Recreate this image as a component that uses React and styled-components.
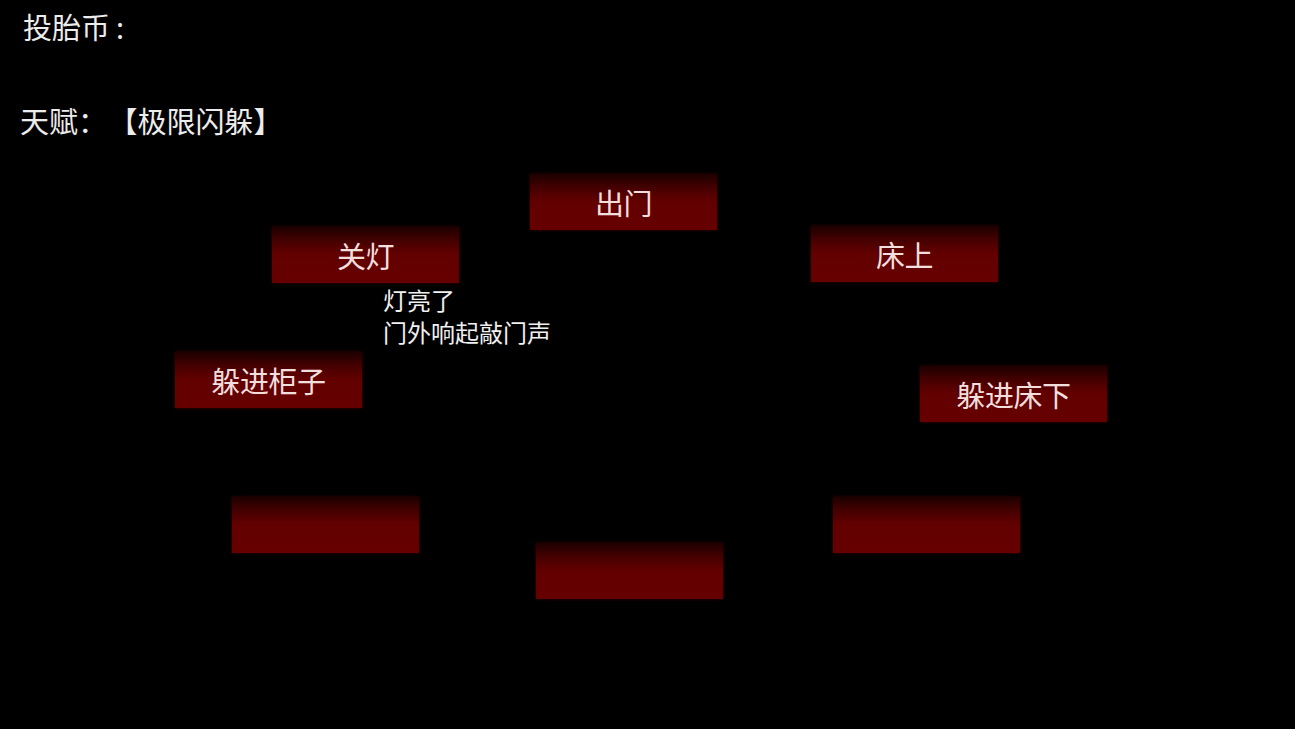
import React from "react"
import styled, { createGlobalStyle } from "styled-components"

const GlobalStyle = createGlobalStyle`
  html, body {
    margin: 0;
    padding: 0;
    background: #000;
  }
  body {
    font-family: "Noto Sans CJK SC", "Noto Sans", sans-serif;
  }
`

// choice buttons sit on a ring around the room, so each has its own spot
const choices = [
  { label: "出门", x: 530, y: 14 },
  { label: "关灯", x: 272, y: 67 },
  { label: "床上", x: 811, y: 66 },
  { label: "躲进柜子", x: 175, y: 192 },
  { label: "躲进床下", x: 920, y: 206 },
  { label: "", x: 232, y: 337 },
  { label: "", x: 833, y: 337 },
  { label: "", x: 536, y: 383 },
]

const App = () => {
  return (
    <Screen>
      <GlobalStyle />
      <Header>
        <StatLine>
          投胎币<Colon>:</Colon>
        </StatLine>
        <StatLine $indent={20}>
          天赋：<Talent>【极限闪躲】</Talent>
        </StatLine>
      </Header>
      <Board>
        {choices.map((c, i) => (
          <Choice key={i} style={{ left: c.x, top: c.y }}>
            {c.label}
          </Choice>
        ))}
        <Message>
          灯亮了
          <br />
          门外响起敲门声
        </Message>
      </Board>
    </Screen>
  )
}

export default App

const Screen = styled.div`
  width: 1295px;
  height: 729px;
  background: #000;
  overflow: hidden;
  display: flex;
  flex-direction: column;
`
const Header = styled.div`
  height: 160px;
  padding-top: 6px;
  box-sizing: border-box;
  display: flex;
  flex-direction: column;
  gap: 54px;
`
const StatLine = styled.div`
  padding-left: ${(p) => p.$indent ?? 23}px;
  font-size: 29px;
  line-height: 40px;
  color: #ececec;
  white-space: nowrap;
`
const Colon = styled.span`
  margin-left: 6px;
`
const Talent = styled.span`
  margin-left: 16px;
`
const Board = styled.div`
  position: relative;
  flex: 1;
`
const Choice = styled.div`
  position: absolute;
  width: 187px;
  height: 56px;
  display: flex;
  align-items: center;
  justify-content: center;
  background: linear-gradient(
    to bottom,
    #1c0000 0%,
    #420000 22%,
    #620000 48%,
    #660000 100%
  );
  box-shadow: 0 0 3px rgba(90, 0, 0, 0.7);
  color: #f3dede;
  font-size: 29px;
  letter-spacing: -0.5px;
  box-sizing: border-box;
`
const Message = styled.div`
  position: absolute;
  left: 383px;
  top: 124px;
  font-size: 24px;
  line-height: 32px;
  color: #f0f0f0;
`
